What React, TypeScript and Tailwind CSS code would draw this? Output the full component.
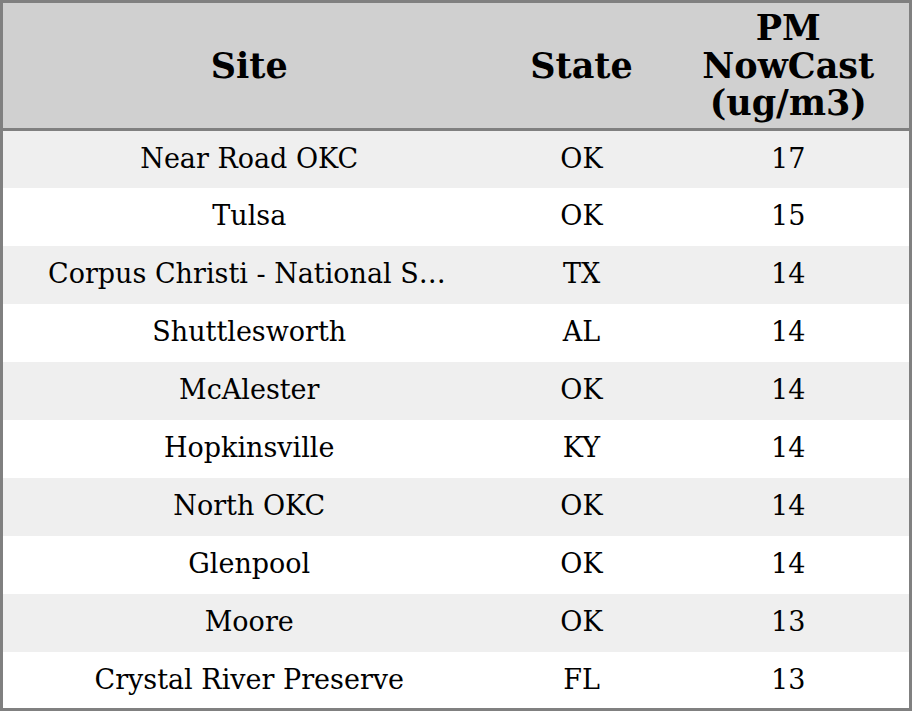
const ROWS = [
  { site: 'Near Road OKC', state: 'OK', pm: 17 },
  { site: 'Tulsa', state: 'OK', pm: 15 },
  { site: 'Corpus Christi - National Seashore', state: 'TX', pm: 14 },
  { site: 'Shuttlesworth', state: 'AL', pm: 14 },
  { site: 'McAlester', state: 'OK', pm: 14 },
  { site: 'Hopkinsville', state: 'KY', pm: 14 },
  { site: 'North OKC', state: 'OK', pm: 14 },
  { site: 'Glenpool', state: 'OK', pm: 14 },
  { site: 'Moore', state: 'OK', pm: 13 },
  { site: 'Crystal River Preserve', state: 'FL', pm: 13 },
];

export default function App() {
  return (
    <div className="w-[912px] h-[711px] bg-white font-['DejaVu_Serif',serif] text-black">
      <table className="w-full table-fixed border-collapse border-[3px] border-[#808080]">
        <colgroup>
          <col className="w-[494px]" />
          <col className="w-[172px]" />
          <col />
        </colgroup>
        <thead>
          <tr className="h-[128px] bg-[#d0d0d0] border-b-[3px] border-[#808080]">
            <th className="text-[35px] leading-[37.5px] font-bold">Site</th>
            <th className="text-[35px] leading-[37.5px] font-bold">State</th>
            <th className="text-[35px] leading-[37.5px] font-bold">
              PM
              <br />
              NowCast
              <br />
              (ug/m3)
            </th>
          </tr>
        </thead>
        <tbody>
          {ROWS.map((r, i) => (
            <tr key={r.site} className={`h-[58px] ${i % 2 === 0 ? 'bg-[#efefef]' : 'bg-white'}`}>
              <td className="px-[45px] text-center text-[27px] whitespace-nowrap overflow-hidden text-ellipsis">
                {r.site}
              </td>
              <td className="text-center text-[27px]">{r.state}</td>
              <td className="text-center text-[27px]">{r.pm}</td>
            </tr>
          ))}
        </tbody>
      </table>
    </div>
  );
}
